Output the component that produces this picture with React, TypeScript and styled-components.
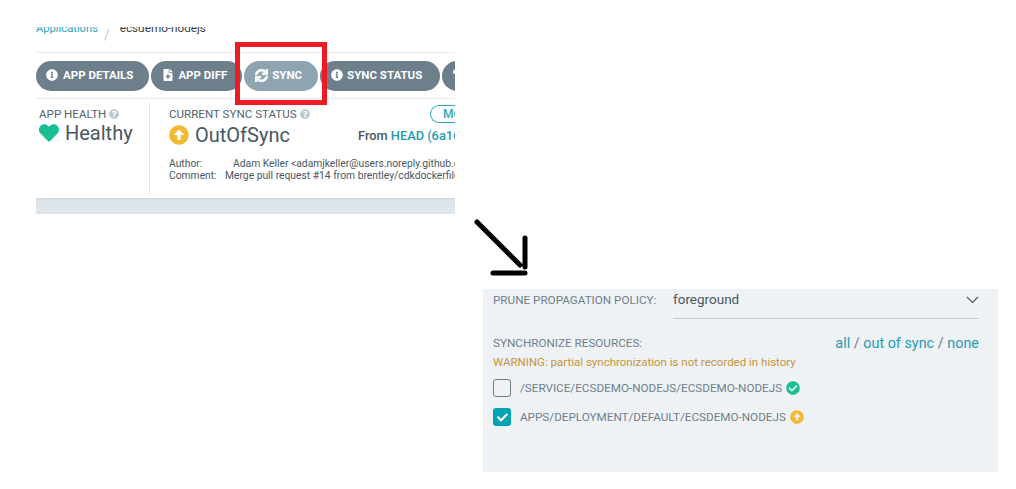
import React from 'react';
import styled, { createGlobalStyle } from 'styled-components';
import {
  FaInfoCircle,
  FaFileMedical,
  FaSync,
  FaHeart,
  FaArrowAltCircleUp,
  FaCheckCircle,
  FaQuestionCircle,
  FaCheck,
  FaHistory,
} from 'react-icons/fa';

const GlobalStyle = createGlobalStyle`
  html, body {
    margin: 0;
    padding: 0;
    background: #fff;
    font-family: Roboto, "Liberation Sans", sans-serif;
  }
`;

const Page = styled.div`
  position: relative;
  width: 1016px;
  height: 489px;
  overflow: hidden;
  background: #fff;
`;

/* top left piece */
const AppShot = styled.section`
  width: 419px;
  height: 187px;
  margin: 0 0 0 36px;
  border-top: 27px solid #fff;
  overflow: hidden;
  background: #fff;
`;

const Crumbs = styled.div`
  display: flex;
  height: 31px;
  margin-top: -6px;
  align-items: flex-start;
  line-height: 15px;
  border-bottom: 1px solid #e8ecef;
`;

const CrumbLink = styled.span`
  color: #2aa9bd;
  font-size: 11.2px;
`;

const CrumbSlash = styled.span`
  margin: 7px 10px 0 6px;
  color: #c4ccd2;
  font-size: 14px;
`;

const CrumbCurrent = styled.span`
  color: #363c4a;
  font-size: 11.7px;
`;

const Toolbar = styled.div`
  display: flex;
  gap: 2px;
  height: 46px;
  padding-top: 8px;
  box-sizing: border-box;
  overflow: hidden;
  border-bottom: 1px solid #e8ecef;
`;

const ActionButton = styled.div<{ $light?: boolean; $padEnd?: number }>`
  display: flex;
  flex: none;
  align-items: center;
  gap: 4px;
  height: 30px;
  box-sizing: border-box;
  padding: 0 ${(p) => p.$padEnd ?? 16}px 2px 11px;
  border-radius: 15px;
  background: ${(p) => (p.$light ? '#8fa4b1' : '#6d7f8b')};
  color: #fff;
  font-size: 11.5px;
  font-weight: 700;
  white-space: nowrap;
  &:first-child {
    padding-left: 10px;
    gap: 5px;
  }
`;

const StatusRow = styled.div`
  display: flex;
  height: 99px;
`;

const HealthCol = styled.div`
  width: 114px;
  flex: none;
  margin: 3px 0;
  padding: 5px 0 0 3px;
  box-sizing: border-box;
  border-right: 1px solid #e3e7ea;
`;

const SyncCol = styled.div`
  flex: 1;
  min-width: 0;
  margin: 3px 0;
  padding: 5px 0 0 19px;
`;

const StatusLabel = styled.div`
  display: flex;
  align-items: center;
  gap: 3px;
  height: 14px;
  font-size: 11.6px;
  color: #56636e;
  white-space: nowrap;
  svg {
    color: #bcc6cd;
  }
`;

const StatusValue = styled.div`
  display: flex;
  align-items: center;
  gap: 6px;
  height: 24px;
  font-size: 20px;
  color: #495763;
  white-space: nowrap;
`;

const SyncHead = styled.div`
  display: flex;
  justify-content: space-between;
  white-space: nowrap;
`;

const SyncValueRow = styled.div`
  display: flex;
  justify-content: space-between;
  align-items: center;
  white-space: nowrap;
`;

const ModeChip = styled.div`
  width: 40px;
  height: 16px;
  margin: -2px -28px 0 0;
  padding-left: 12px;
  border: 1px solid #2aa9bd;
  border-right: none;
  border-radius: 9px 0 0 9px;
  font-size: 12px;
  font-weight: 500;
  line-height: 16px;
  color: #2aa9bd;
  overflow: hidden;
`;

const FromText = styled.div`
  width: 97px;
  font-size: 12.8px;
  font-weight: 500;
  color: #495763;
  overflow: hidden;
  span {
    color: #1f9cb0;
  }
`;

const CommitMeta = styled.div`
  display: grid;
  grid-template-columns: 56px 1fr;
  margin-top: 11px;
  font-size: 10.3px;
  line-height: 12px;
  color: #495763;
  white-space: nowrap;
  overflow: hidden;
`;

const MetaValue = styled.div<{ $indent?: boolean }>`
  padding-left: ${(p) => (p.$indent ? '8px' : '0')};
`;

const GreyBand = styled.div`
  height: 16px;
  background: #dee6eb;
  box-shadow: inset 0 2px 2px -1px #ccd4da;
`;

/* annotation drawn on top of the screenshots */
const RedBox = styled.div`
  position: absolute;
  left: 235px;
  top: 42px;
  width: 92px;
  height: 63px;
  box-sizing: border-box;
  border: 5px solid #ed1c24;
`;

const ArrowMark = styled.svg`
  position: absolute;
  left: 470px;
  top: 215px;
`;

/* bottom right piece */
const SyncPanel = styled.section`
  width: 515px;
  height: 183px;
  margin: 75px 0 0 483px;
  padding: 0 19px 0 10px;
  box-sizing: border-box;
  overflow: hidden;
  background: #eff2f5;
`;

const PolicyRow = styled.div`
  display: flex;
  height: 30px;
`;

const PolicyLabel = styled.div`
  width: 180px;
  flex: none;
  padding-top: 4px;
  font-size: 11.7px;
  line-height: 14px;
  color: #6d7f8b;
`;

const PolicySelect = styled.div`
  flex: 1;
  display: flex;
  justify-content: space-between;
  height: 29px;
  border-bottom: 1px solid #c8ced2;
  font-size: 13.5px;
  line-height: 21px;
  color: #495763;
`;

const Chevron = styled.svg`
  margin: 7px 0 0 0;
`;

const ResourcesHead = styled.div`
  display: flex;
  justify-content: space-between;
  align-items: center;
  height: 16px;
  margin-top: 16px;
`;

const ResourcesLabel = styled.div`
  font-size: 11.7px;
  color: #6d7f8b;
`;

const SelectLinks = styled.div`
  font-size: 14.4px;
  color: #1f9cb0;
`;

const SlashText = styled.span`
  color: #6d7f8b;
`;

const Warning = styled.div`
  margin-top: 4px;
  font-size: 11.5px;
  line-height: 14px;
  color: #c4953a;
`;

const ResourceList = styled.div`
  display: flex;
  flex-direction: column;
  gap: 11px;
  margin-top: 10px;
`;

const ResourceRow = styled.div`
  display: flex;
  align-items: center;
  height: 18px;
  font-size: 11.7px;
  color: #6d7f8b;
`;

const Check = styled.div<{ $on?: boolean }>`
  display: flex;
  flex: none;
  align-items: center;
  justify-content: center;
  width: 18px;
  height: 18px;
  box-sizing: border-box;
  margin-right: 9px;
  border-radius: 3px;
  border: ${(p) => (p.$on ? 'none' : '1.5px solid #6d7f8b')};
  background: ${(p) => (p.$on ? '#00a2b3' : 'transparent')};
  color: #fff;
`;

const ResourceName = styled.span`
  margin-right: 4px;
`;

const App = () => {
  return (
    <Page>
      <GlobalStyle />
      <AppShot>
        <Crumbs>
          <CrumbLink>Applications</CrumbLink>
          <CrumbSlash>/</CrumbSlash>
          <CrumbCurrent>ecsdemo-nodejs</CrumbCurrent>
        </Crumbs>
        <Toolbar>
          <ActionButton>
            <FaInfoCircle size={12} />
            APP DETAILS
          </ActionButton>
          <ActionButton $padEnd={15}>
            <FaFileMedical size={12} />
            APP DIFF
          </ActionButton>
          <ActionButton $light>
            <FaSync size={13} stroke="currentColor" strokeWidth={30} />
            SYNC
          </ActionButton>
          <ActionButton $padEnd={18}>
            <FaInfoCircle size={12} />
            SYNC STATUS
          </ActionButton>
          <ActionButton>
            <FaHistory size={12} />
            HISTORY AND ROLLBACK
          </ActionButton>
        </Toolbar>
        <StatusRow>
          <HealthCol>
            <StatusLabel>
              APP HEALTH <FaQuestionCircle size={10} />
            </StatusLabel>
            <StatusValue>
              <FaHeart size={20} color="#18be94" />
              Healthy
            </StatusValue>
          </HealthCol>
          <SyncCol>
            <SyncHead>
              <StatusLabel>
                CURRENT SYNC STATUS <FaQuestionCircle size={10} />
              </StatusLabel>
              <ModeChip>MORE</ModeChip>
            </SyncHead>
            <SyncValueRow>
              <StatusValue>
                <FaArrowAltCircleUp size={20} color="#f4b92f" />
                OutOfSync
              </StatusValue>
              <FromText>
                From <span>HEAD (6a16c6d)</span>
              </FromText>
            </SyncValueRow>
            <CommitMeta>
              <div>Author:</div>
              <MetaValue $indent>Adam Keller &lt;adamjkeller@users.noreply.github.com&gt;</MetaValue>
              <div>Comment:</div>
              <MetaValue>Merge pull request #14 from brentley/cdkdockerfile</MetaValue>
            </CommitMeta>
          </SyncCol>
        </StatusRow>
        <GreyBand />
      </AppShot>
      <SyncPanel>
        <PolicyRow>
          <PolicyLabel>PRUNE PROPAGATION POLICY:</PolicyLabel>
          <PolicySelect>
            foreground
            <Chevron width="13" height="8" viewBox="0 0 13 8">
              <path d="M1 1l5.500 5.500L12 1" fill="none" stroke="#495763" strokeWidth="1.1" />
            </Chevron>
          </PolicySelect>
        </PolicyRow>
        <ResourcesHead>
          <ResourcesLabel>SYNCHRONIZE RESOURCES:</ResourcesLabel>
          <SelectLinks>
            all <SlashText>/</SlashText> out of sync <SlashText>/</SlashText> none
          </SelectLinks>
        </ResourcesHead>
        <Warning>WARNING: partial synchronization is not recorded in history</Warning>
        <ResourceList>
          <ResourceRow>
            <Check />
            <ResourceName>/SERVICE/ECSDEMO-NODEJS/ECSDEMO-NODEJS</ResourceName>
            <FaCheckCircle size={14} color="#18be94" />
          </ResourceRow>
          <ResourceRow>
            <Check $on>
              <FaCheck size={11} />
            </Check>
            <ResourceName>APPS/DEPLOYMENT/DEFAULT/ECSDEMO-NODEJS</ResourceName>
            <FaArrowAltCircleUp size={14} color="#f4b92f" />
          </ResourceRow>
        </ResourceList>
      </SyncPanel>
      <RedBox />
      <ArrowMark width="62" height="62" viewBox="0 0 62 62">
        <path
          d="M7 7L50 50M55 23V52M23 58H55"
          fill="none"
          stroke="#000"
          strokeWidth="5"
          strokeLinecap="round"
        />
      </ArrowMark>
    </Page>
  );
};

export default App;
